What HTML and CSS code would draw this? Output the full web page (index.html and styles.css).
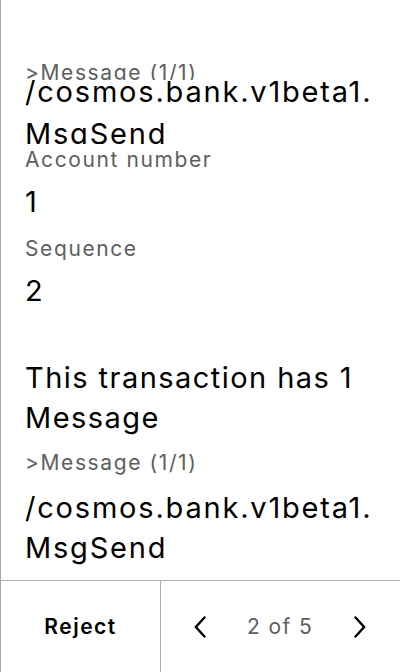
FILE: index.html
```html
<!DOCTYPE html>
<html>
<head>
<meta charset="utf-8">
<link rel="stylesheet" href="styles.css">
</head>
<body>
<div class="screen">
  <div class="content">
    <div class="field squeezed">
      <div class="label clip-label">&gt;Message (1/1)</div>
      <div class="value clip-value">/cosmos.bank.v1beta1.<br>MsgSend</div>
    </div>
    <div class="field first">
      <div class="label">Account number</div>
      <div class="value">1</div>
    </div>
    <div class="field">
      <div class="label">Sequence</div>
      <div class="value">2</div>
    </div>
    <div class="heading">This transaction has 1<br>Message</div>
    <div class="field after-heading">
      <div class="label">&gt;Message (1/1)</div>
      <div class="value msg">/cosmos.bank.v1beta1.<br>MsgSend</div>
    </div>
  </div>
  <div class="footer">
    <div class="reject">Reject</div>
    <div class="pager">
      <svg class="chev" width="12" height="22" viewBox="0 0 12 22"><path d="M10.5 1.5 L1.8 11 L10.5 20.5" fill="none" stroke="#000" stroke-width="2.4" stroke-linecap="round" stroke-linejoin="round"/></svg>
      <span class="count">2 of 5</span>
      <svg class="chev" width="12" height="22" viewBox="0 0 12 22"><path d="M1.5 1.5 L10.2 11 L1.5 20.5" fill="none" stroke="#000" stroke-width="2.4" stroke-linecap="round" stroke-linejoin="round"/></svg>
    </div>
  </div>
</div>
</body>
</html>
```
FILE: styles.css
```css
html, body {
  margin: 0;
  padding: 0;
  background: #fff;
}
body {
  font-family: Inter, "Noto Sans", sans-serif;
  color: #000;
}
.screen {
  width: 400px;
  height: 672px;
  box-sizing: border-box;
  border-left: 1px solid #a9a9a9;
  display: flex;
  flex-direction: column;
}
.content {
  height: 580px;
  overflow: hidden;
  padding: 61px 16px 0 24px;
  box-sizing: border-box;
}
.label {
  font-size: 21px;
  line-height: 24px;
  letter-spacing: 1.6px;
  color: #5e5e5e;
}
.value {
  font-size: 29px;
  line-height: 40px;
  letter-spacing: 1.8px;
  margin-top: 10px;
}
.field + .field {
  margin-top: 15px;
}
.clip-label {
  height: 19px;
  overflow: hidden;
}
.clip-value {
  margin-top: -9px;
  line-height: 42px;
  height: 73px;
  overflow: hidden;
}
.field.first {
  margin-top: 4px;
}
.heading {
  font-size: 29px;
  line-height: 40px;
  letter-spacing: 1.45px;
  margin-top: 47px;
  white-space: nowrap;
}
.field.after-heading {
  margin-top: 13px;
}
.value.msg {
  margin-top: 13px;
}
.footer {
  height: 92px;
  box-sizing: border-box;
  border-top: 1px solid #b0b0b0;
  display: grid;
  grid-template-columns: 160px 1fr;
}
.reject {
  display: flex;
  align-items: center;
  justify-content: center;
  font-size: 21px;
  font-weight: 600;
  letter-spacing: 1.5px;
  border-right: 1px solid #b0b0b0;
}
.pager {
  display: flex;
  align-items: center;
  justify-content: space-between;
  padding: 0 34px 0 33px;
}
.count {
  font-size: 21px;
  letter-spacing: 1.4px;
  color: #5e5e5e;
}
.chev {
  display: block;
}
```
